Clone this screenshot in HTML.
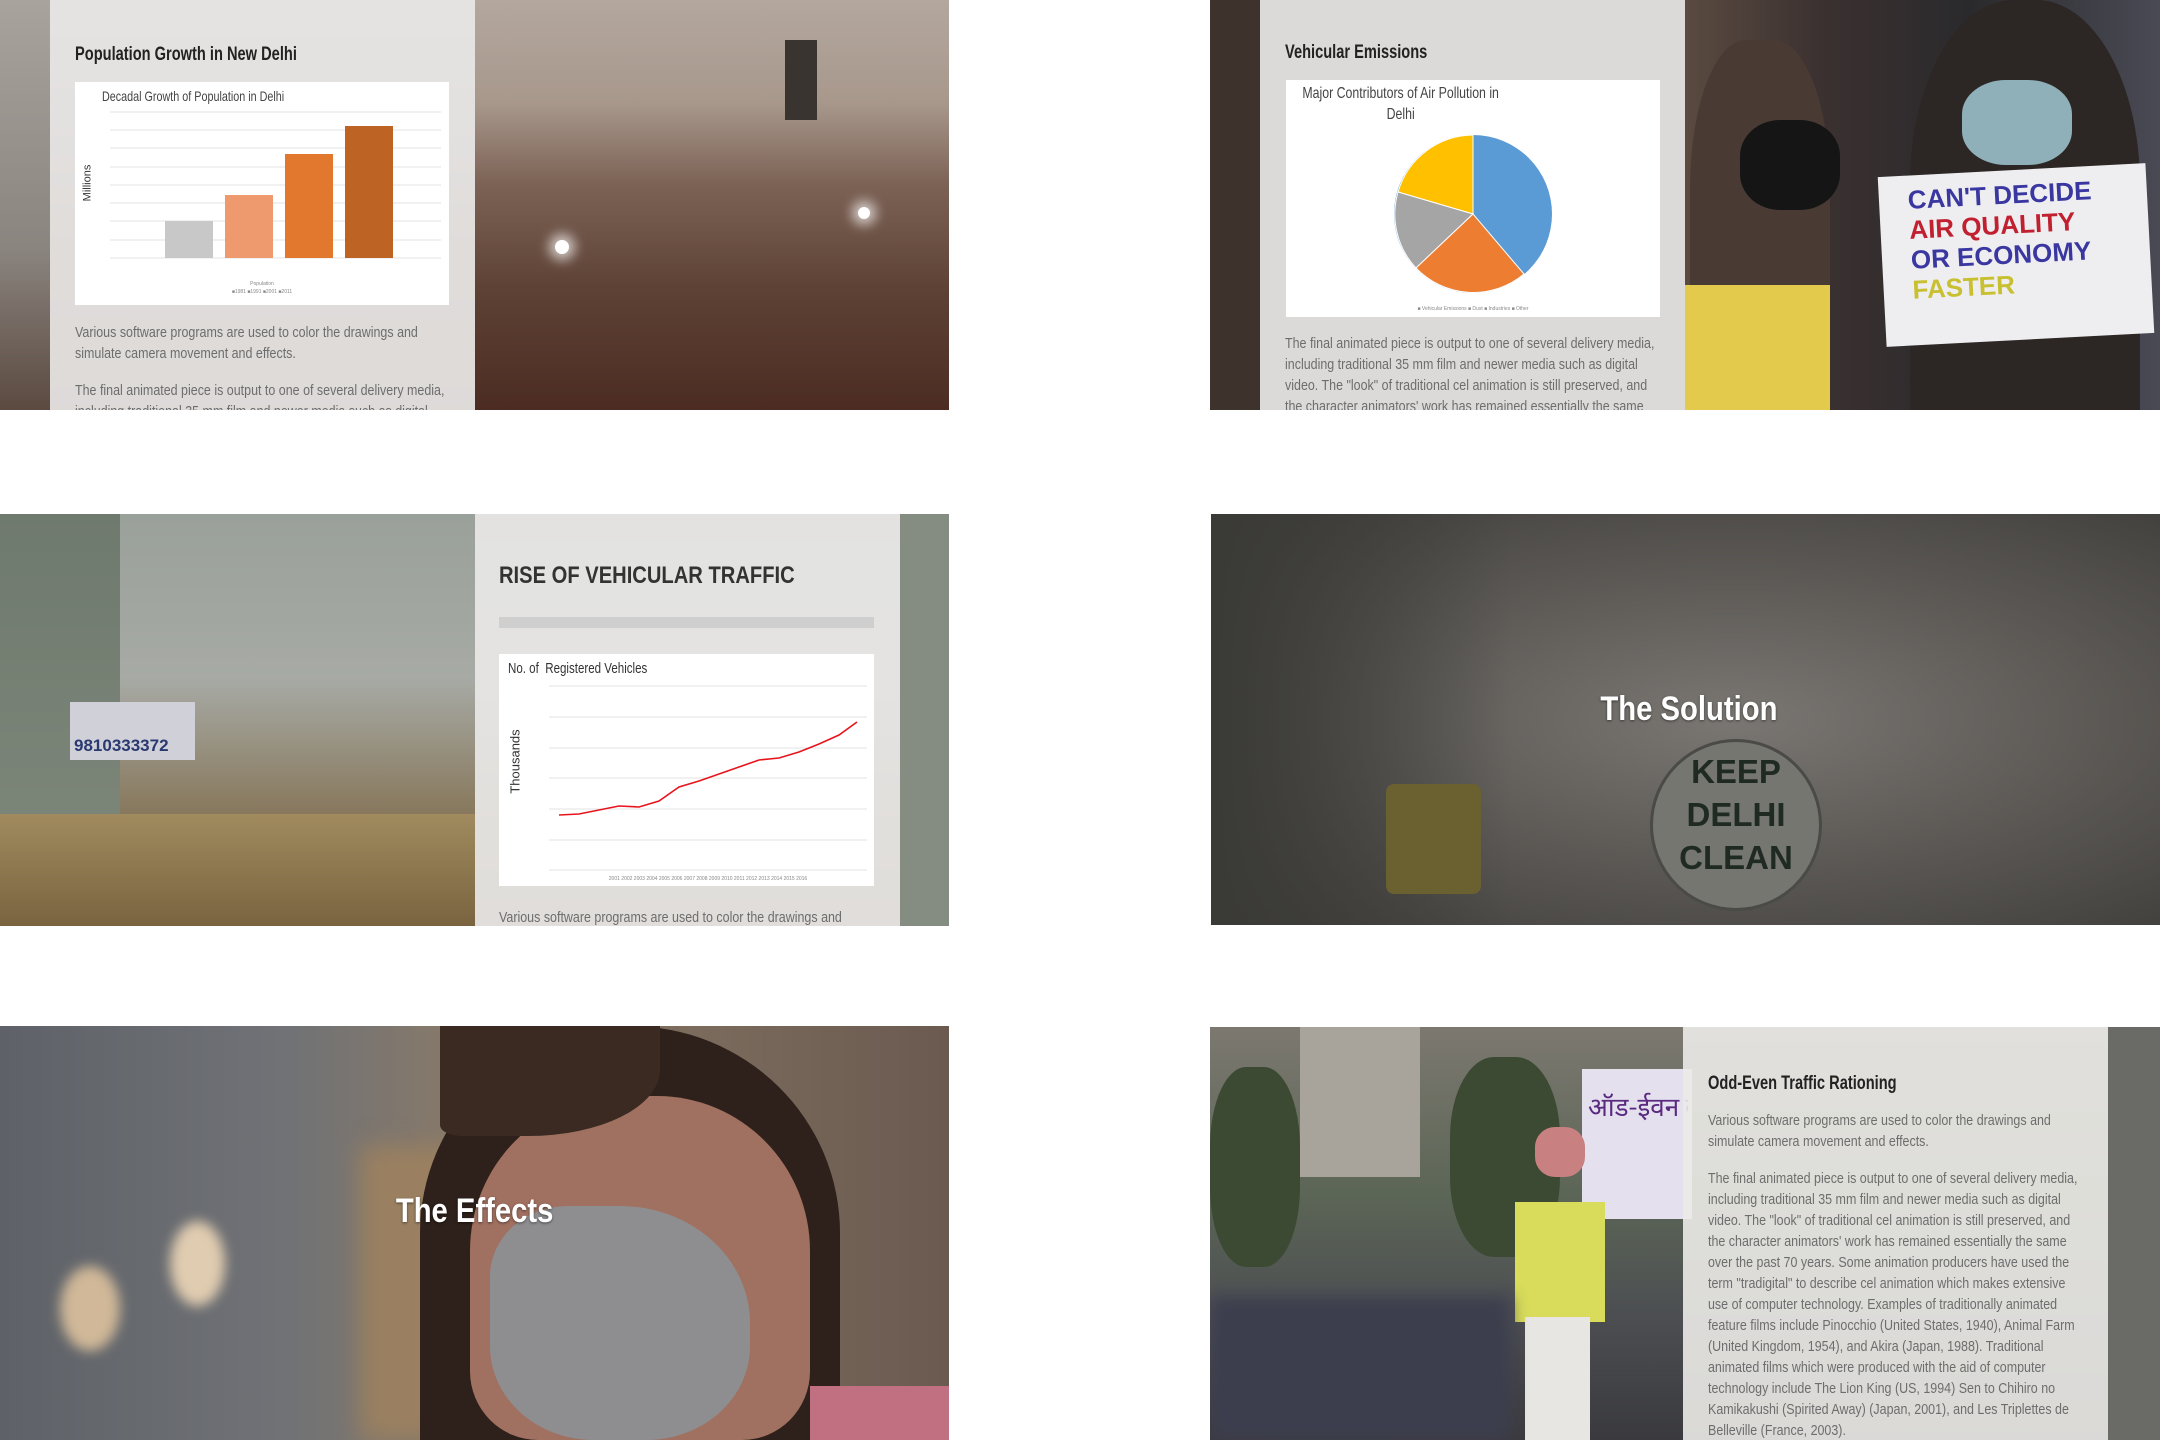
<!DOCTYPE html>
<html><head><meta charset="utf-8"><style>
*{margin:0;padding:0;box-sizing:border-box}
body{width:2160px;height:1440px;background:#fff;position:relative;overflow:hidden;font-family:"Liberation Sans",sans-serif}
.tile{position:absolute;overflow:hidden}
.panel{position:absolute;background:rgba(232,231,230,0.93)}
.cx{transform-origin:0 0;transform:scaleX(0.77);white-space:nowrap}
h2{font-weight:bold;color:#222;font-size:19px}
.txt{transform-origin:0 0;transform:scaleX(0.86)}
p{color:#6d6d6d;font-size:14.5px;line-height:21px;margin-bottom:16px}
.chart{position:absolute;background:#fff}
.big{position:absolute;font-weight:bold;color:#fff;font-size:36px;text-shadow:0 1px 3px rgba(0,0,0,.5);transform:scaleX(0.86);white-space:nowrap}
</style></head><body>

<!-- Tile 1 -->
<div class="tile" style="left:0;top:0;width:949px;height:410px;background:linear-gradient(180deg,#b5aca5 0%,#9a8a80 30%,#6a4c40 60%,#4f3228 100%)">
 <div style="position:absolute;left:0;top:0;width:50px;height:410px;background:linear-gradient(180deg,#a9a39e,#8b8580 60%,#5b4a40)"></div>
 <div style="position:absolute;left:475px;top:0;width:474px;height:410px;background:linear-gradient(180deg,#b3a79e 0%,#a8988c 25%,#7c6255 45%,#5e4236 70%,#4c2c22 100%)"></div>
 <div style="position:absolute;left:555px;top:240px;width:14px;height:14px;border-radius:50%;background:#fff;box-shadow:0 0 12px 6px rgba(255,255,255,.7)"></div>
 <div style="position:absolute;left:858px;top:207px;width:12px;height:12px;border-radius:50%;background:#fff;box-shadow:0 0 12px 6px rgba(255,255,255,.7)"></div>
 <div style="position:absolute;left:785px;top:40px;width:32px;height:80px;background:#3a3430"></div>
 <div class="panel" style="left:50px;top:0;width:425px;height:410px">
  <div class="cx" style="position:absolute;left:25px;top:44px"><h2>Population Growth in New Delhi</h2></div>
  <div class="chart" style="left:25px;top:82px;width:374px;height:223px">
   <div class="cx" style="position:absolute;left:27px;top:6px;font-size:14px;color:#444">Decadal Growth of Population in Delhi</div>
   <div style="position:absolute;left:-6px;top:95px;transform:rotate(-90deg);font-size:11px;color:#333">Millions</div>
   <svg style="position:absolute;left:0;top:0" width="374" height="223">
    <g stroke="#e3e3e3"><line x1="35" y1="30" x2="366" y2="30"/><line x1="35" y1="48" x2="366" y2="48"/><line x1="35" y1="66" x2="366" y2="66"/><line x1="35" y1="85" x2="366" y2="85"/><line x1="35" y1="103" x2="366" y2="103"/><line x1="35" y1="121" x2="366" y2="121"/><line x1="35" y1="139" x2="366" y2="139"/><line x1="35" y1="158" x2="366" y2="158"/><line x1="35" y1="176" x2="366" y2="176"/></g>
    <rect x="90" y="139" width="48" height="37" fill="#c9c8c8"/>
    <rect x="150" y="113" width="48" height="63" fill="#ef9a6e"/>
    <rect x="210" y="72" width="48" height="104" fill="#e2772e"/>
    <rect x="270" y="44" width="48" height="132" fill="#bd6424"/>
    <text x="187" y="203" font-size="5" fill="#888" text-anchor="middle">Population</text>
    <text x="187" y="211" font-size="5" fill="#888" text-anchor="middle">■1981 ■1991 ■2001 ■2011</text>
   </svg>
  </div>
  <div class="txt" style="position:absolute;left:25px;top:323px;width:435px">
   <p>Various software programs are used to color the drawings and simulate camera movement and effects.</p>
   <p>The final animated piece is output to one of several delivery media, including traditional 35 mm film and newer media such as digital</p>
  </div>
 </div>
</div>

<!-- Tile 2 -->
<div class="tile" style="left:1210px;top:0;width:950px;height:410px;background:#3d332c">
 <div style="position:absolute;left:475px;top:0;width:475px;height:410px;background:linear-gradient(90deg,#5a4a40,#3a3030 30%,#2a2a2c 60%,#4a4a55)"></div>
 <div style="position:absolute;left:480px;top:40px;width:140px;height:370px;background:#4a3a34;border-radius:40% 40% 0 0"></div>
 <div style="position:absolute;left:700px;top:0;width:230px;height:410px;background:#2c2624;border-radius:45% 45% 0 0"></div>
 <div style="position:absolute;left:530px;top:120px;width:100px;height:90px;border-radius:40%;background:#151515"></div>
 <div style="position:absolute;left:752px;top:80px;width:110px;height:85px;border-radius:40%;background:#8fb0b8"></div>
 <div style="position:absolute;left:672px;top:170px;width:268px;height:170px;background:#eeeef0;transform:rotate(-3deg)"></div>
 <div style="position:absolute;left:700px;top:180px;font-size:26px;font-weight:bold;color:#3a38a0;line-height:30px;transform:rotate(-3deg)">CAN'T DECIDE<br><span style="color:#c02030">AIR QUALITY</span><br>OR ECONOMY<br><span style="color:#c8c030">FASTER</span></div>
 <div style="position:absolute;left:475px;top:285px;width:145px;height:125px;background:#e3c94c"></div>
 <div class="panel" style="left:50px;top:0;width:425px;height:410px">
  <div class="cx" style="position:absolute;left:25px;top:42px"><h2>Vehicular Emissions</h2></div>
  <div class="chart" style="left:26px;top:80px;width:374px;height:237px">
   <div class="cx" style="position:absolute;left:3px;top:3px;width:290px;text-align:center;font-size:16px;color:#444;line-height:21px;white-space:normal">Major Contributors of Air Pollution in Delhi</div>
   <svg style="position:absolute;left:0;top:0" width="374" height="237">
    <circle cx="187" cy="134" r="79" fill="#5b9bd5"/>
    <path d="M187 134 L187 55 A79 79 0 0 0 112 112 Z" fill="#ffc000" stroke="#fff"/>
    <path d="M187 134 L112 112 A79 79 0 0 0 130 188 Z" fill="#a5a5a5" stroke="#fff"/>
    <path d="M187 134 L130 188 A79 79 0 0 0 238 194 Z" fill="#ed7d31" stroke="#fff"/>
    <text x="187" y="230" font-size="5" fill="#888" text-anchor="middle">■ Vehicular Emissions ■ Dust ■ Industries ■ Other</text>
   </svg>
  </div>
  <div class="txt" style="position:absolute;left:25px;top:334px;width:440px">
   <p>The final animated piece is output to one of several delivery media, including traditional 35 mm film and newer media such as digital video. The "look" of traditional cel animation is still preserved, and the character animators' work has remained essentially the same over</p>
  </div>
 </div>
</div>

<!-- Tile 3 -->
<div class="tile" style="left:0;top:514px;width:949px;height:412px;background:linear-gradient(180deg,#9aa09a 0%,#a7aaa5 40%,#8a7c62 70%,#6c5638 100%)">
 <div style="position:absolute;left:0;top:0;width:120px;height:412px;background:linear-gradient(180deg,#6f7a6e,#7f887b)"></div>
 <div style="position:absolute;left:70px;top:188px;width:125px;height:58px;background:#d0d0d8"></div>
 <div style="position:absolute;left:74px;top:222px;font-size:17px;font-weight:bold;color:#2a3a70">9810333372</div>
 <div style="position:absolute;left:0;top:300px;width:475px;height:112px;background:linear-gradient(180deg,#a08a5e,#7a6440)"></div>
 <div style="position:absolute;left:900px;top:0;width:49px;height:412px;background:#858d82"></div>
 <div class="panel" style="left:475px;top:0;width:425px;height:412px">
  <div style="position:absolute;left:24px;top:48px;transform-origin:0 0;transform:scaleX(0.84);white-space:nowrap"><h2 style="font-size:24px;color:#333">RISE OF VEHICULAR TRAFFIC</h2></div>
  <div style="position:absolute;left:24px;top:103px;width:375px;height:11px;background:#cfcfcf"></div>
  <div class="chart" style="left:24px;top:140px;width:375px;height:232px">
   <div class="cx" style="position:absolute;left:9px;top:6px;font-size:15px;color:#333">No. of &nbsp;Registered Vehicles</div>
   <div style="position:absolute;left:-16px;top:100px;transform:rotate(-90deg);font-size:13px;color:#333">Thousands</div>
   <svg style="position:absolute;left:0;top:0" width="375" height="232">
    <g stroke="#e3e3e3"><line x1="50" y1="32" x2="368" y2="32"/><line x1="50" y1="63" x2="368" y2="63"/><line x1="50" y1="94" x2="368" y2="94"/><line x1="50" y1="124" x2="368" y2="124"/><line x1="50" y1="155" x2="368" y2="155"/><line x1="50" y1="186" x2="368" y2="186"/><line x1="50" y1="216" x2="368" y2="216"/></g>
    <polyline fill="none" stroke="#e8141c" stroke-width="1.6" points="60,161 80,160 100,156 120,152 140,153 160,147 180,133 200,127 220,120 240,113 260,106 280,104 300,98 320,90 340,81 358,68"/>
    <text x="209" y="226" font-size="5" fill="#888" text-anchor="middle">2001 2002 2003 2004 2005 2006 2007 2008 2009 2010 2011 2012 2013 2014 2015 2016</text>
   </svg>
  </div>
  <div class="txt" style="position:absolute;left:24px;top:394px;width:450px"><p>Various software programs are used to color the drawings and</p></div>
 </div>
</div>

<!-- Tile 4 -->
<div class="tile" style="left:1211px;top:514px;width:949px;height:411px;background:radial-gradient(ellipse at 55% 50%,#7a7773 0%,#5f5c58 45%,#3e3c39 100%)">
 <div style="position:absolute;left:0;top:0;width:300px;height:411px;background:linear-gradient(90deg,#3a3a36,transparent)"></div>
 <div style="position:absolute;left:175px;top:270px;width:95px;height:110px;background:#6a6030;border-radius:8px"></div>
 <div style="position:absolute;left:439px;top:225px;width:172px;height:172px;border-radius:50%;background:#767671;border:3px solid #4a4a46"></div>
 <div style="position:absolute;left:439px;top:236px;width:172px;text-align:center;font-size:33px;font-weight:bold;color:#1f2a22;line-height:43px">KEEP<br>DELHI<br>CLEAN</div>
 <div class="big" style="left:375px;top:176px;font-size:34px">The Solution</div>
</div>

<!-- Tile 5 -->
<div class="tile" style="left:0;top:1026px;width:949px;height:414px;background:linear-gradient(90deg,#5e6268 0%,#707276 30%,#8a7a68 50%,#6a5a50 100%)">
 <div style="position:absolute;left:60px;top:240px;width:60px;height:85px;border-radius:50%;background:#d0b898;filter:blur(6px)"></div>
 <div style="position:absolute;left:170px;top:195px;width:55px;height:85px;border-radius:50%;background:#e0ccb0;filter:blur(6px)"></div>
 <div style="position:absolute;left:360px;top:120px;width:140px;height:294px;background:#9a8060;filter:blur(12px)"></div>
 <div style="position:absolute;left:420px;top:0;width:420px;height:414px;background:#2e201a;border-radius:50% 50% 0 0"></div>
 <div style="position:absolute;left:470px;top:70px;width:340px;height:344px;background:#a07060;border-radius:45% 45% 20% 20%"></div>
 <div style="position:absolute;left:440px;top:0;width:220px;height:110px;background:#3a2a22;border-radius:0 0 60% 10%"></div>
 <div style="position:absolute;left:490px;top:180px;width:260px;height:234px;background:#8e8e90;border-radius:30% 50% 40% 40%"></div>
 <div style="position:absolute;left:810px;top:360px;width:139px;height:54px;background:#c07080"></div>
 <div class="big" style="left:383px;top:166px;font-size:34px">The Effects</div>
</div>

<!-- Tile 6 -->
<div class="tile" style="left:1210px;top:1027px;width:950px;height:413px;background:linear-gradient(180deg,#7c7870 0%,#5c6656 40%,#4c4e52 70%,#3a3a3e 100%)">
 <div style="position:absolute;left:90px;top:0;width:120px;height:150px;background:#a8a49c"></div>
 <div style="position:absolute;left:0;top:40px;width:90px;height:200px;background:#3c4a34;border-radius:40%"></div>
 <div style="position:absolute;left:240px;top:30px;width:110px;height:200px;background:#3c4a34;border-radius:40%"></div>
 <div style="position:absolute;left:372px;top:42px;width:110px;height:150px;background:#e4e0ee"></div>
 <div style="position:absolute;left:378px;top:60px;font-size:26px;color:#5a2a80;font-family:'Noto Sans CJK SC',sans-serif;white-space:nowrap;width:100px;overflow:hidden">ऑड-ईवन का</div>
 <div style="position:absolute;left:325px;top:100px;width:50px;height:50px;border-radius:40%;background:#c88080"></div>
 <div style="position:absolute;left:305px;top:175px;width:90px;height:120px;background:#d8dc5a"></div>
 <div style="position:absolute;left:315px;top:290px;width:65px;height:123px;background:#e8e6e2"></div>
 <div style="position:absolute;left:0;top:270px;width:300px;height:143px;background:#3c3e4e;filter:blur(8px)"></div>
 <div style="position:absolute;left:898px;top:0;width:52px;height:413px;background:#6a6a66"></div>
 <div class="panel" style="left:473px;top:0;width:425px;height:413px;background:rgba(236,235,232,0.9)">
  <div class="cx" style="position:absolute;left:25px;top:46px"><h2>Odd-Even Traffic Rationing</h2></div>
  <div class="txt" style="position:absolute;left:25px;top:84px;width:440px">
   <p>Various software programs are used to color the drawings and simulate camera movement and effects.</p>
   <p>The final animated piece is output to one of several delivery media, including traditional 35 mm film and newer media such as digital video. The "look" of traditional cel animation is still preserved, and the character animators' work has remained essentially the same over the past 70 years. Some animation producers have used the term "tradigital" to describe cel animation which makes extensive use of computer technology. Examples of traditionally animated feature films include Pinocchio (United States, 1940), Animal Farm (United Kingdom, 1954), and Akira (Japan, 1988). Traditional animated films which were produced with the aid of computer technology include The Lion King (US, 1994) Sen to Chihiro no Kamikakushi (Spirited Away) (Japan, 2001), and Les Triplettes de Belleville (France, 2003).</p>
  </div>
 </div>
</div>

</body></html>
